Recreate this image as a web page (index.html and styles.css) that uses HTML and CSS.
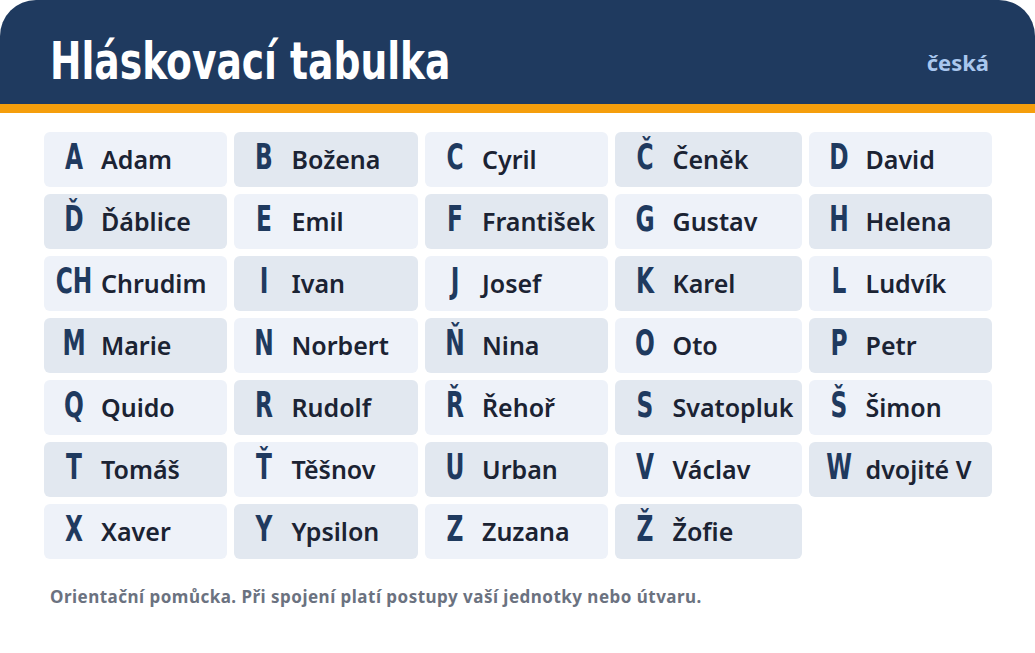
FILE: index.html
```html
<!DOCTYPE html>
<html lang="cs">
<head>
<meta charset="utf-8">
<title>Hláskovací tabulka</title>
<link rel="stylesheet" href="styles.css">
</head>
<body>
<main class="card">
  <header class="head">
    <h1 class="title">Hláskovací tabulka</h1>
    <span class="lang">česká</span>
  </header>
  <section class="grid">
    <div class="cell"><span class="ltr">A</span><span class="name">Adam</span></div>
    <div class="cell"><span class="ltr">B</span><span class="name">Božena</span></div>
    <div class="cell"><span class="ltr">C</span><span class="name">Cyril</span></div>
    <div class="cell"><span class="ltr">Č</span><span class="name">Čeněk</span></div>
    <div class="cell"><span class="ltr">D</span><span class="name">David</span></div>
    <div class="cell"><span class="ltr">Ď</span><span class="name">Ďáblice</span></div>
    <div class="cell"><span class="ltr">E</span><span class="name">Emil</span></div>
    <div class="cell"><span class="ltr">F</span><span class="name">František</span></div>
    <div class="cell"><span class="ltr">G</span><span class="name">Gustav</span></div>
    <div class="cell"><span class="ltr">H</span><span class="name">Helena</span></div>
    <div class="cell"><span class="ltr">CH</span><span class="name">Chrudim</span></div>
    <div class="cell"><span class="ltr">I</span><span class="name">Ivan</span></div>
    <div class="cell"><span class="ltr">J</span><span class="name">Josef</span></div>
    <div class="cell"><span class="ltr">K</span><span class="name">Karel</span></div>
    <div class="cell"><span class="ltr">L</span><span class="name">Ludvík</span></div>
    <div class="cell"><span class="ltr">M</span><span class="name">Marie</span></div>
    <div class="cell"><span class="ltr">N</span><span class="name">Norbert</span></div>
    <div class="cell"><span class="ltr">Ň</span><span class="name">Nina</span></div>
    <div class="cell"><span class="ltr">O</span><span class="name">Oto</span></div>
    <div class="cell"><span class="ltr">P</span><span class="name">Petr</span></div>
    <div class="cell"><span class="ltr">Q</span><span class="name">Quido</span></div>
    <div class="cell"><span class="ltr">R</span><span class="name">Rudolf</span></div>
    <div class="cell"><span class="ltr">Ř</span><span class="name">Řehoř</span></div>
    <div class="cell"><span class="ltr">S</span><span class="name">Svatopluk</span></div>
    <div class="cell"><span class="ltr">Š</span><span class="name">Šimon</span></div>
    <div class="cell"><span class="ltr">T</span><span class="name">Tomáš</span></div>
    <div class="cell"><span class="ltr">Ť</span><span class="name">Těšnov</span></div>
    <div class="cell"><span class="ltr">U</span><span class="name">Urban</span></div>
    <div class="cell"><span class="ltr">V</span><span class="name">Václav</span></div>
    <div class="cell"><span class="ltr">W</span><span class="name">dvojité V</span></div>
    <div class="cell"><span class="ltr">X</span><span class="name">Xaver</span></div>
    <div class="cell"><span class="ltr">Y</span><span class="name">Ypsilon</span></div>
    <div class="cell"><span class="ltr">Z</span><span class="name">Zuzana</span></div>
    <div class="cell"><span class="ltr">Ž</span><span class="name">Žofie</span></div>
  </section>
  <p class="note">Orientační pomůcka. Při spojení platí postupy vaší jednotky nebo útvaru.</p>
</main>
</body>
</html>
```

FILE: styles.css
```css
html, body {
  margin: 0;
  padding: 0;
  background: #ffffff;
}

body {
  font-family: "Noto Sans", "DejaVu Sans", sans-serif;
  color: #1b2333;
}

.card {
  width: 1035px;
  min-height: 653px;
  background: #ffffff;
  border-radius: 36px 36px 0 0;
  overflow: hidden;
}

.head {
  box-sizing: content-box;
  height: 85px;
  padding: 19px 46px 0 50px;
  background: #1f3a5f;
  border-bottom: 9px solid #f59e0c;
  display: flex;
  align-items: center;
  justify-content: space-between;
}

.title {
  margin: 0;
  font-family: "DejaVu Sans Condensed", "DejaVu Sans", sans-serif;
  font-weight: 700;
  font-size: 51px;
  line-height: 52px;
  color: #ffffff;
  white-space: nowrap;
  transform: scaleX(0.82);
  transform-origin: left center;
}

.lang {
  font-family: "Noto Sans", sans-serif;
  font-weight: 700;
  font-size: 22px;
  color: #a9c7ee;
}

.grid {
  margin: 19px 43px 0 44px;
  display: grid;
  grid-template-columns: repeat(5, 1fr);
  grid-auto-rows: 55px;
  gap: 7px 7px;
}

.cell {
  display: flex;
  align-items: baseline;
  padding: 0 8px 0 12px;
  border-radius: 6px;
  background: #eef2f9;
  line-height: 50px;
}

.cell:nth-child(even) {
  background: #e2e8f0;
}

.ltr {
  display: flex;
  justify-content: center;
  flex: 0 0 36px;
  width: 36px;
  min-width: 0;
  font-family: "DejaVu Sans Condensed", "DejaVu Sans", sans-serif;
  font-weight: 700;
  font-size: 35px;
  color: #1f3a5f;
  margin-right: 9px;
  white-space: nowrap;
  transform: scaleX(0.74);
  transform-origin: center;
}

.name {
  font-family: "Noto Sans", sans-serif;
  font-weight: 600;
  font-size: 25px;
  color: #1b2333;
  white-space: nowrap;
}

.note {
  margin: 28px 0 0 50px;
  font-family: "Noto Sans", sans-serif;
  font-weight: 700;
  font-size: 17px;
  letter-spacing: 0.48px;
  line-height: 20px;
  color: #6b7280;
}
```
